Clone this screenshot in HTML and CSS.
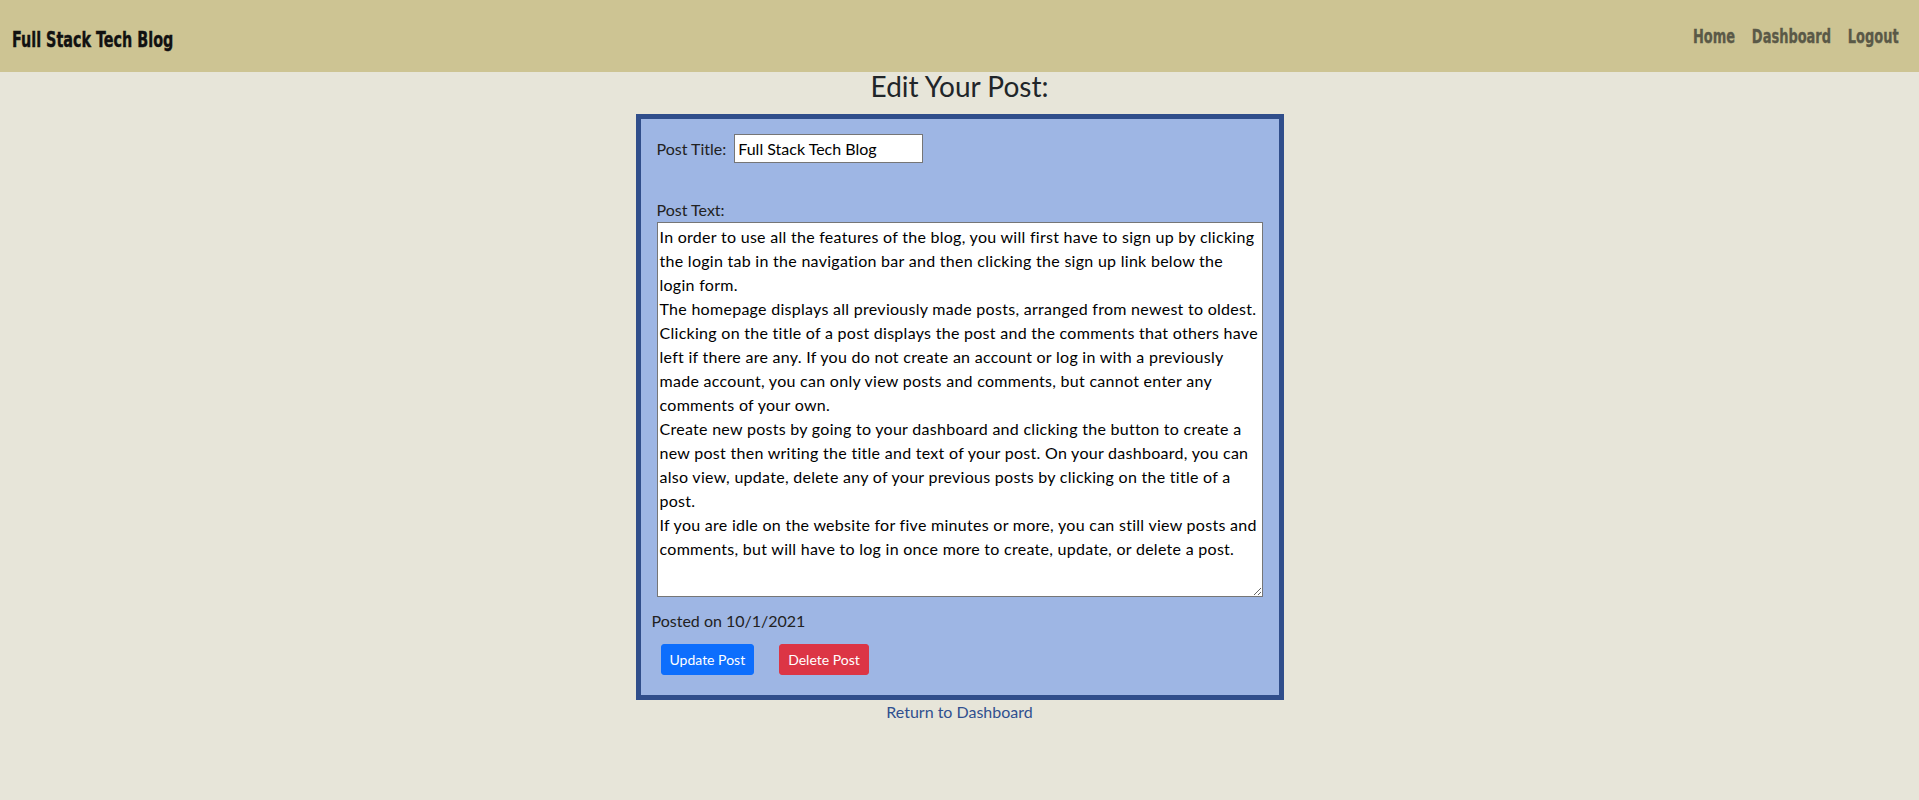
FILE: index.html
```html
<!DOCTYPE html>
<html lang="en">
<head>
<meta charset="utf-8">
<title>Full Stack Tech Blog</title>
<link rel="stylesheet" href="styles.css">
</head>
<body>
<header class="topbar">
  <a class="brand" href="#">Full Stack Tech Blog</a>
  <nav class="nav">
    <a class="nav-link" href="#">Home</a>
    <a class="nav-link" href="#">Dashboard</a>
    <a class="nav-link" href="#">Logout</a>
  </nav>
</header>
<main class="main">
  <h3 class="page-title">Edit Your Post:</h3>
  <div class="edit-card">
    <form class="edit-form">
      <div class="field-row">
        <label class="field-label" for="post-title">Post Title:</label>
        <input class="title-input" id="post-title" type="text" value="Full Stack Tech Blog">
      </div>
      <div class="field-col">
        <label class="field-label" for="post-text">Post Text:</label>
        <textarea class="text-input" id="post-text">In order to use all the features of the blog, you will first have to sign up by clicking the login tab in the navigation bar and then clicking the sign up link below the login form.
The homepage displays all previously made posts, arranged from newest to oldest. Clicking on the title of a post displays the post and the comments that others have left if there are any. If you do not create an account or log in with a previously made account, you can only view posts and comments, but cannot enter any comments of your own.
Create new posts by going to your dashboard and clicking the button to create a new post then writing the title and text of your post. On your dashboard, you can also view, update, delete any of your previous posts by clicking on the title of a post.
If you are idle on the website for five minutes or more, you can still view posts and comments, but will have to log in once more to create, update, or delete a post.</textarea>
      </div>
      <p class="posted">Posted on 10/1/2021</p>
      <div class="actions">
        <button type="button" class="btn btn-primary">Update Post</button>
        <button type="button" class="btn btn-danger">Delete Post</button>
      </div>
    </form>
  </div>
  <a class="return-link" href="#">Return to Dashboard</a>
</main>
</body>
</html>
```
FILE: styles.css
```css
* {
  box-sizing: border-box;
}

html, body {
  margin: 0;
  padding: 0;
}

body {
  background: #e7e5d9;
  color: #212529;
  font-family: "Lato", "Liberation Sans", sans-serif;
  font-size: 16px;
  line-height: 1.5;
  min-height: 800px;
}

.topbar {
  height: 72px;
  background: #cdc493;
  display: flex;
  align-items: flex-start;
  justify-content: space-between;
  padding: 0 20px 0 12px;
}

.brand {
  display: inline-block;
  font-family: "DejaVu Sans Condensed", "DejaVu Sans", sans-serif;
  font-weight: 700;
  font-size: 22px;
  line-height: 22px;
  color: #111;
  text-decoration: none;
  margin-top: 29px;
  white-space: nowrap;
  transform: scaleX(0.726);
  transform-origin: left center;
  -webkit-text-stroke: 0.4px #111;
}

.nav {
  display: flex;
  gap: 22px;
  margin-top: 27px;
  transform: scaleX(0.76);
  transform-origin: right center;
}

.nav-link {
  font-family: "DejaVu Sans Condensed", "DejaVu Sans", sans-serif;
  font-weight: 700;
  font-size: 19px;
  line-height: 19px;
  color: #5a5947;
  text-decoration: none;
  -webkit-text-stroke: 0.3px #5a5947;
}

.main {
  display: flex;
  flex-direction: column;
  align-items: center;
}

.page-title {
  margin: 0;
  padding-bottom: 14px;
  font-size: 28px;
  font-weight: 400;
  line-height: 28px;
  color: #212529;
}

.edit-card {
  width: 648px;
  height: 586px;
  border: 5px solid #304e8b;
  background: #9eb6e4;
}

.edit-form {
  display: flex;
  flex-direction: column;
  padding: 15px 16px 0 16px;
}

.field-row {
  display: flex;
  align-items: center;
  gap: 8px;
  height: 29px;
}

.field-label {
  color: #222;
}

.title-input {
  width: 189px;
  height: 29px;
  padding: 1px 3px;
  border: 1px solid #767676;
  border-radius: 0;
  font: inherit;
  font-size: 16px;
  color: #000;
  background: #fff;
}

.field-col {
  display: flex;
  flex-direction: column;
  margin-top: 35px;
}

.text-input {
  width: 606px;
  height: 375px;
  padding: 2px;
  border: 1px solid #767676;
  border-radius: 0;
  font: inherit;
  font-size: 16px;
  line-height: 24px;
  letter-spacing: 0.28px;
  color: #000;
  background: #fff;
  resize: both;
}

.posted {
  margin: 12px 0 0 -5px;
  color: #222;
}

.actions {
  display: flex;
  gap: 25px;
  margin: 11px 0 0 4px;
}

.btn {
  font: inherit;
  font-size: 14px;
  line-height: 21px;
  padding: 4px 8px;
  border: 1px solid transparent;
  border-radius: 3px;
  color: #fff;
  cursor: pointer;
}

.btn-primary {
  background: #0d6efd;
  border-color: #0d6efd;
}

.btn-danger {
  background: #dc3545;
  border-color: #dc3545;
}

.return-link {
  color: #30508f;
  text-decoration: none;
  line-height: 24px;
}
```
